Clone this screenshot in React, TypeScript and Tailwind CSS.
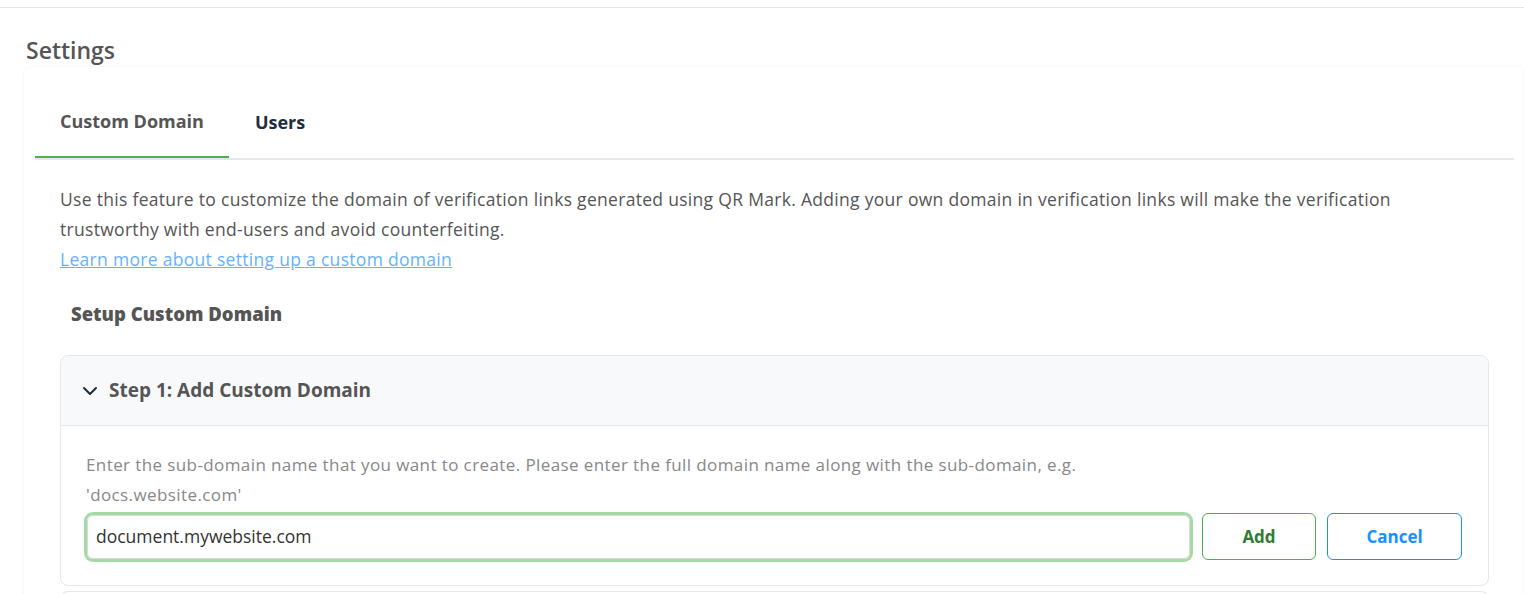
import { ChevronDown } from "lucide-react"

const font = { fontFamily: "'Open Sans', Lato, sans-serif" }

const Tabs = () => (
    <div className="flex border-b-2 border-[#e4e7ed]">
        <div className="h-[72px] px-[25px] flex items-center -mb-[2px] border-b-2 border-[#4caf50] text-[18px] font-bold text-[#555]">
            Custom Domain
        </div>
        <div className="h-[72px] px-[26px] flex items-center text-[18px] font-bold text-[#1f2d3d]">
            Users
        </div>
    </div>
)

const StepOne = () => (
    <div className="border border-[#e4e7ed] rounded-lg overflow-hidden">
        <div className="h-[70px] bg-[#f8f9fb] border-b border-[#e4e7ed] flex items-center pl-[17px] gap-[7px]">
            <ChevronDown className="w-[24px] h-[24px] text-[#1f2d3d]" strokeWidth={2} />
            <div className="text-[19px] font-bold text-[#555]">Step 1: Add Custom Domain</div>
        </div>
        <div className="pt-[24px] pb-[25px] pl-[25px] pr-[26px]">
            <p className="text-[17px] tracking-[0.4px] leading-[30px] text-[#888]">
                Enter the sub-domain name that you want to create. Please enter the full domain name along with the sub-domain, e.g.
                <br />
                'docs.website.com'
            </p>
            <div className="flex items-center mt-[3px]">
                <div className="flex-1 rounded-[6px] ring-[3px] ring-[#a5d9a5] border border-[#d9d9d9] h-[44px] flex items-center px-[8px] mx-[1px]">
                    <input
                        defaultValue="document.mywebsite.com"
                        className="w-full outline-none text-[17.5px] text-[#333] bg-transparent"
                        style={font}
                    />
                </div>
                <button className="ml-[11px] w-[114px] h-[47px] rounded-[6px] border border-[#4caf50] text-[17px] font-bold text-[#2e7d32]">
                    Add
                </button>
                <button className="ml-[11px] w-[135px] h-[47px] rounded-[6px] border border-[#1890ff] text-[17px] font-bold text-[#1890ff]">
                    Cancel
                </button>
            </div>
        </div>
    </div>
)

const App = () => {
    return (
        <div className="w-[1524px] h-[594px] overflow-hidden bg-white" style={font}>
            <div className="h-[8px] border-b border-[#e6e6e6]" />
            <div className="pl-[26px] pt-[28px] h-[59px] text-[23px] font-semibold text-[#555] leading-[28px]">
                Settings
            </div>
            <div className="ml-[24px] mr-[1px] rounded-tl-lg bg-white shadow-[0_0_4px_rgba(0,0,0,0.06)] pt-[19px] px-[11px] pr-[9px] h-[600px]">
                <Tabs />
                <div className="px-[25px]">
                    <p className="pt-[24px] text-[17.5px] tracking-[0.3px] leading-[30px] text-[#555]">
                        Use this feature to customize the domain of verification links generated using QR Mark. Adding your own domain in verification links will make the verification
                        <br />
                        trustworthy with end-users and avoid counterfeiting.
                        <br />
                        <a href="#" className="text-[#66b1ff] underline">Learn more about setting up a custom domain</a>
                    </p>
                    <div className="mt-[26px] pl-[11px] text-[18.5px] font-extrabold text-[#555] leading-[28px]">
                        Setup Custom Domain
                    </div>
                    <div className="mt-[27px]">
                        <StepOne />
                    </div>
                    <div className="mt-[5px] h-[40px] border border-[#e4e7ed] rounded-lg" />
                </div>
            </div>
        </div>
    )
}

export default App
